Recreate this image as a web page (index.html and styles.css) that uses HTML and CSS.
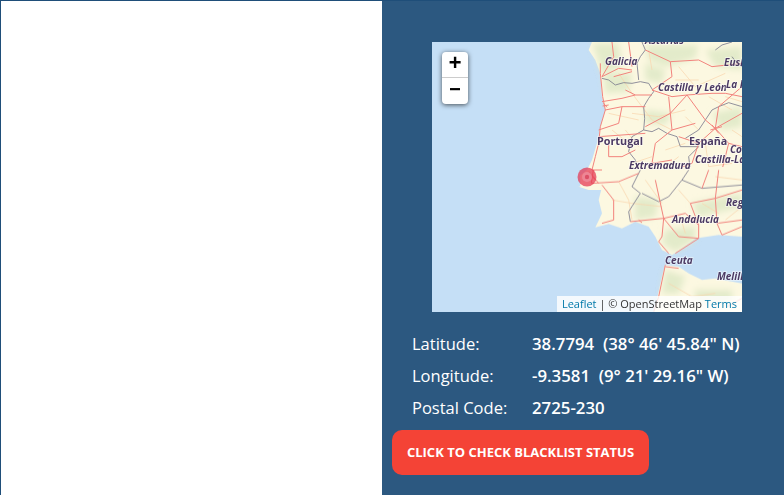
FILE: index.html
```html
<!DOCTYPE html>
<html lang="en">
<head>
<meta charset="utf-8">
<title>IP location</title>
<link rel="stylesheet" href="styles.css">
</head>
<body>
<div class="page">
  <div class="left"></div>
  <section class="panel">
    <div class="map">
      <svg class="tiles" viewBox="0 0 310 270" width="310" height="270" aria-hidden="true">
        <defs>
          <filter id="soft"><feGaussianBlur stdDeviation="9"/></filter>
          <filter id="tile"><feGaussianBlur stdDeviation=".32"/></filter>
        </defs>
        <rect width="310" height="270" fill="#c5dff6"/>
        <g filter="url(#tile)">
        <g transform="translate(0,-12) scale(.33333)">
          <path class="land" d="M480 36 L470 60 L490 90 L505 130 L510 200 L520 240 L505 290 L495 340 L480 390 L465 420 L440 440 L440 470 L470 480 L930 480 L930 36Z"/>
          <g class="green" filter="url(#soft)">
            <path d="M480 40 L560 40 L570 110 L510 130 L495 80Z"/>
            <path d="M640 45 L800 45 L790 85 L700 110 L650 90Z"/>
            <path d="M820 60 L930 50 L930 120 L850 110Z"/>
            <path d="M640 100 L700 120 L690 160 L640 150Z"/>
            <path d="M515 130 L600 130 L590 185 L520 190Z"/>
            <path d="M840 250 L930 230 L930 290 L870 300Z"/>
            <path d="M640 240 L720 250 L700 285 L640 280Z"/>
          </g>
          <g class="minor">
            <path d="M560 130L600 190L660 270L720 300M740 110L790 170L880 130M600 250L680 260L760 240M760 260L800 300M540 300L590 340M700 360L760 340M830 200L900 240M650 60L660 120M820 340L830 410L900 400M530 250L620 270M580 300L620 350M730 150L800 150M880 200L930 215M900 300L930 320M600 400L660 380M690 420L740 380"/>
          </g>
          <g class="border">
            <path d="M510 145L530 150L550 165L575 158L600 160L625 155L650 160L665 185L650 205L635 230L638 265L635 300L600 320L590 365L610 390L625 445"/>
            <path d="M635 300L660 305L680 295L705 310L735 320L745 350L800 350L770 380L775 420L770 450"/>
            <path d="M820 270L840 240L860 230L890 218L930 230M630 36L640 60L625 80L615 100L620 150M850 60L870 45L900 36M900 80L915 100L930 110M820 270L800 300L760 325"/>
          </g>
          <g class="road">
            <path d="M505 100L505 130L512 200L520 240L505 290L500 340L490 380L480 420"/>
            <path d="M540 36L545 80L510 140L560 115L600 120M590 36L600 110"/>
            <path d="M510 215L570 205L610 195L660 195M520 240L570 230L560 280L500 300M570 230L640 230"/>
            <path d="M660 180L720 200L765 195L840 190L880 190M715 95L720 140L660 180"/>
            <path d="M640 60L715 95L800 90L840 110L930 100M765 195L715 250L640 290"/>
            <path d="M765 195L820 270L850 295M710 200L715 250L720 300M850 295L930 250"/>
            <path d="M850 295L800 340L740 320M850 295L890 340L930 350M850 295L860 230L930 170"/>
            <path d="M720 300L670 340L660 400L640 450M500 320L640 310M530 345L530 380L570 380L610 360"/>
            <path d="M480 420L620 420M800 340L780 400L730 420M840 285L860 310M835 300L870 290"/>
            <path d="M515 220L525 232M512 228L530 225M545 140L600 125M580 180L610 195M880 190L930 200"/>
            <path d="M890 340L870 420L930 440M720 300L790 280M660 400L720 390M540 430L540 480"/>
          </g>
        </g>
        <g transform="translate(0,128) scale(.33333)">
          <path class="land" d="M445 -10 L510 -10 L510 50 L500 90 L510 130 L490 172 L530 162 L570 175 L610 155 L650 170 L670 200 L690 240 L720 255 L750 235 L790 205 L860 195 L930 200 L930 -10Z"/>
          <rect x="0" y="-10" width="445" height="60" fill="#c5dff6"/>
          <path class="land" d="M700 285 L740 290 L770 310 L810 330 L850 325 L930 340 L930 430 L665 430 L690 320Z"/>
          <g class="green" filter="url(#soft)">
            <path d="M610 80 L680 90 L670 140 L610 150Z"/>
            <path d="M700 180 L790 170 L790 210 L730 245 L690 220Z"/>
            <path d="M780 100 L930 70 L930 110 L800 140Z"/>
            <path d="M700 300 L760 320 L740 370 L690 370Z"/>
            <path d="M790 360 L900 360 L900 400 L790 400Z"/>
          </g>
          <g class="minor">
            <path d="M560 35L590 90L600 150M640 30L690 100M740 60L775 100M850 20L930 30M880 150L930 110M710 340L780 380L850 370M540 90L600 100M600 100L690 110M810 100L860 130M745 140L760 190"/>
          </g>
          <g class="border">
            <path d="M625 0L600 50L625 70L590 125L595 155"/>
            <path d="M770 0L750 30L710 80L680 95L630 70M750 30L810 55L930 45"/>
          </g>
          <g class="road">
            <path d="M480 40L560 35L620 10M510 45L545 90L545 150L510 160"/>
            <path d="M670 30L695 145L690 200L680 215L710 250"/>
            <path d="M595 155L695 145L760 130L800 165L800 205L730 250M695 145L740 200L800 205"/>
            <path d="M775 100L800 165M775 100L850 85L930 60M850 85L855 160L930 150"/>
            <path d="M855 160L870 195L930 170M860 0L850 85M830 0L810 55"/>
            <path d="M700 285L680 380L665 426M700 290L740 295M480 15L500 40"/>
            <path d="M470 5L490 30M484 0L478 40M885 410L930 385M620 150L630 158"/>
          </g>
        </g>
        </g>
        <circle cx="155" cy="135" r="9.5" fill="#e5344f" fill-opacity=".72"/>
        <circle cx="155" cy="135" r="5" fill="#ee8d9c" fill-opacity=".8"/>
        <circle cx="155" cy="135" r="2.2" fill="#d9475e" fill-opacity=".85"/>
        <g class="labels">
          <text x="213" y="2">Asturias</text>
          <text x="173" y="23">Galicia</text>
          <text x="226" y="49">Castilla y León</text>
          <text x="292" y="24">Euskadi</text>
          <text x="294" y="46">La Rioja</text>
          <text x="165" y="103" class="big">Portugal</text>
          <text x="257" y="103" class="big">España</text>
          <text x="298" y="111">Com</text>
          <text x="263" y="121">Castilla-La Mancha</text>
          <text x="197" y="127">Extremadura</text>
          <text x="240" y="181">Andalucía</text>
          <text x="294" y="164">Región</text>
          <text x="233" y="222">Ceuta</text>
          <text x="285" y="238">Melilla</text>
        </g>
      </svg>
      <div class="zoom">
        <a class="zoom-btn zoom-in">+</a>
        <a class="zoom-btn zoom-out">−</a>
      </div>
      <div class="attribution"><a>Leaflet</a> | © OpenStreetMap <a>Terms</a></div>
    </div>
    <dl class="facts">
      <div class="fact"><dt>Latitude:</dt><dd>38.7794&nbsp; (38° 46' 45.84" N)</dd></div>
      <div class="fact"><dt>Longitude:</dt><dd>-9.3581&nbsp; (9° 21' 29.16" W)</dd></div>
      <div class="fact"><dt>Postal Code:</dt><dd>2725-230</dd></div>
    </dl>
    <a class="check">CLICK TO CHECK BLACKLIST STATUS</a>
  </section>
</div>
</body>
</html>
```
FILE: styles.css
```css
* { box-sizing: border-box; }
html, body { margin: 0; padding: 0; background: #fff; }
body { font-family: "Open Sans", sans-serif; overflow: hidden; }
.page {
  display: flex;
  width: 784px;
  height: 495px;
  border-top: 1px solid #1f4e79;
  border-left: 1px solid #1f4e79;
}
.left { width: 381px; flex: none; background: #fff; }
.panel {
  flex: 1;
  background: #2c5880;
  padding: 41px 0 0 10px;
  color: #fff;
}
.map {
  position: relative;
  width: 310px;
  height: 270px;
  margin-left: 40px;
  overflow: hidden;
}
.tiles { display: block; }
.land { fill: #fcf8e1; }
.green { fill: #e3ebca; }
.minor path { fill: none; stroke: #f9d6ae; stroke-width: 2.2; }
.border path { fill: none; stroke: #76768a; stroke-width: 2.4; }
.road path { fill: none; stroke: #f2837c; stroke-width: 3; stroke-linejoin: round; }
.labels text {
  font: italic 700 10px "Open Sans", sans-serif;
  fill: #4b3a63;
  stroke: rgba(255,255,255,.6);
  stroke-width: 1.5px;
  paint-order: stroke;
}
.labels .big { font-style: normal; font-size: 10.8px; }
.zoom {
  position: absolute;
  left: 10px;
  top: 10px;
  width: 26px;
  border-radius: 4px;
  background: #fff;
  box-shadow: 0 1px 5px rgba(0,0,0,.65);
}
.zoom-btn {
  display: block;
  height: 26px;
  font: 700 22px/26px "Liberation Mono", monospace;
  text-align: center;
  color: #000;
}
.zoom-in { border-bottom: 1px solid #ccc; }
.zoom-out { font-size: 20px; }
.attribution {
  position: absolute;
  right: 0;
  bottom: 0;
  height: 16px;
  padding: 0 5px;
  background: rgba(255,255,255,.8);
  color: #333;
  font-size: 11px;
  line-height: 16px;
  white-space: nowrap;
}
.attribution a { color: #0078a8; }
.facts { margin: 15px 0 0 20px; }
.fact { display: flex; height: 32px; align-items: center; white-space: nowrap; }
.fact dt { width: 120px; font-size: 16.5px; font-weight: 400; }
.fact dd { margin: 0; font-size: 16.8px; font-weight: 600; }
.check {
  display: block;
  width: 257px;
  height: 45px;
  margin-top: 7px;
  border-radius: 10px;
  background: #f44336;
  color: #fff;
  font-size: 13px;
  font-weight: 700;
  line-height: 45px;
  text-align: center;
}
```
